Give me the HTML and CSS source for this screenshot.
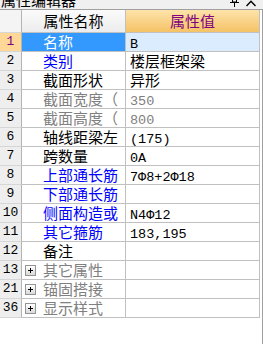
FILE: index.html
```html
<!DOCTYPE html>
<html lang="zh-CN">
<head>
    <meta charset="UTF-8">
    <title>属性编辑器</title>
    <link rel="stylesheet" href="styles.css">
</head>
<body>
<div id="panel">
    <div id="titlebar">
        <span class="title">属性编辑器</span>
        <span class="title-btns">
            <svg class="pin" width="9" height="9" viewBox="0 0 9 9"><rect x="2.5" y="-3" width="4" height="5" fill="none" stroke="#000"/><path d="M0 2.5H9M4.5 2.5V7" stroke="#000" fill="none"/></svg>
            <svg class="close" width="10" height="9" viewBox="0 0 10 9"><path d="M0.5 6L5 1.2L9.5 6" stroke="#000" stroke-width="1.4" fill="none"/></svg>
        </span>
    </div>
    <div id="grid">
        <div class="row head">
            <div class="cell idx"></div>
            <div class="cell name">属性名称</div>
            <div class="cell val">属性值</div>
        </div>
        <div class="row selected">
            <div class="cell idx">1</div>
            <div class="cell name"><span class="tree"></span>名称</div>
            <div class="cell val"><span class="num">B</span></div>
        </div>
        <div class="row">
            <div class="cell idx">2</div>
            <div class="cell name blue"><span class="tree"></span>类别</div>
            <div class="cell val">楼层框架梁</div>
        </div>
        <div class="row">
            <div class="cell idx">3</div>
            <div class="cell name"><span class="tree"></span>截面形状</div>
            <div class="cell val">异形</div>
        </div>
        <div class="row">
            <div class="cell idx">4</div>
            <div class="cell name gray"><span class="tree"></span>截面宽度（</div>
            <div class="cell val gray"><span class="num">350</span></div>
        </div>
        <div class="row">
            <div class="cell idx">5</div>
            <div class="cell name gray"><span class="tree"></span>截面高度（</div>
            <div class="cell val gray"><span class="num">800</span></div>
        </div>
        <div class="row">
            <div class="cell idx">6</div>
            <div class="cell name"><span class="tree"></span>轴线距梁左</div>
            <div class="cell val"><span class="num">(175)</span></div>
        </div>
        <div class="row">
            <div class="cell idx">7</div>
            <div class="cell name"><span class="tree"></span>跨数量</div>
            <div class="cell val"><span class="num">0A</span></div>
        </div>
        <div class="row">
            <div class="cell idx">8</div>
            <div class="cell name blue"><span class="tree"></span>上部通长筋</div>
            <div class="cell val"><span class="num">7Φ8+2Φ18</span></div>
        </div>
        <div class="row">
            <div class="cell idx">9</div>
            <div class="cell name blue"><span class="tree"></span>下部通长筋</div>
            <div class="cell val"></div>
        </div>
        <div class="row">
            <div class="cell idx">10</div>
            <div class="cell name blue"><span class="tree"></span>侧面构造或</div>
            <div class="cell val"><span class="num">N4Φ12</span></div>
        </div>
        <div class="row">
            <div class="cell idx">11</div>
            <div class="cell name blue"><span class="tree"></span>其它箍筋</div>
            <div class="cell val"><span class="num">183,195</span></div>
        </div>
        <div class="row">
            <div class="cell idx">12</div>
            <div class="cell name"><span class="tree"></span>备注</div>
            <div class="cell val"></div>
        </div>
        <div class="row">
            <div class="cell idx">13</div>
            <div class="cell name gray"><span class="tree"><i class="expander"></i></span>其它属性</div>
            <div class="cell val"></div>
        </div>
        <div class="row">
            <div class="cell idx">21</div>
            <div class="cell name gray"><span class="tree"><i class="expander"></i></span>锚固搭接</div>
            <div class="cell val"></div>
        </div>
        <div class="row">
            <div class="cell idx">36</div>
            <div class="cell name gray"><span class="tree"><i class="expander"></i></span>显示样式</div>
            <div class="cell val"></div>
        </div>
    </div>
</div>
</body>
</html>
```

FILE: styles.css
```css
*{
    margin:0;
    padding:0;
}
body{
    width: 263px;
    height: 344px;
    overflow: hidden;
    background: #fff;
    color: #000;
    font-size: 15px;
    font-family: "Noto Sans CJK SC", "Liberation Sans", sans-serif;
}

#titlebar{
    height: 9px;
    overflow: hidden;
    display: flex;
    background: #f0f0f0;
    border-bottom: 1px solid #a0a0a0;
}
#titlebar .title{
    display: block;
    line-height: 15px;
    margin: -8px 0 0 1px;
}
#titlebar .title-btns{
    margin-left: auto;
    margin-right: 7px;
    display: flex;
    gap: 7px;
}

#grid{
    height: 334px;
    border-right: 1px solid #a0a0a0;
}
.row{
    display: flex;
}
.cell{
    height: 18px;
    line-height: 18px;
    border-right: 1px solid #c0c0c0;
    border-bottom: 1px solid #c0c0c0;
    white-space: nowrap;
}
.idx{
    width: 21px;
    text-align: center;
    background: #eeeeee;
    border-bottom-color: #d6d6d6;
    border-right-color: #b4b4b4;
    font-family: "Liberation Mono", monospace;
    font-size: 13px;
}
.name{
    width: 103px;
    display: flex;
}
.val{
    width: 129px;
    padding-left: 4px;
}
.num{
    font-family: "Liberation Mono", "Noto Sans CJK SC", monospace;
    font-size: 13.5px;
}
.tree{
    width: 21px;
    flex: none;
    display: flex;
    align-items: center;
}
.expander{
    width: 9px;
    height: 9px;
    margin-left: 3px;
    border: 1px solid #949494;
    background: linear-gradient(#ffffff, #dadada);
    position: relative;
}
.expander::before,
.expander::after{
    content: "";
    position: absolute;
    background: #000;
}
.expander::before{
    left: 2px;
    top: 4px;
    width: 5px;
    height: 1px;
}
.expander::after{
    left: 4px;
    top: 2px;
    width: 1px;
    height: 5px;
}

.blue{
    color: #0000ff;
}
.gray{
    color: #808080;
}

.head .cell{
    height: 22px;
    line-height: 22px;
}
.head .idx{
    background: #f4f4f4;
}
.head .name{
    justify-content: center;
    background: linear-gradient(#fbfbfb, #ececec);
}
.head .val{
    padding-left: 0;
    width: 133px;
    text-align: center;
    color: #800080;
    background: linear-gradient(#fde3aa, #f5c266);
}

.selected .idx{
    background: #ffd898;
    color: #800080;
}
.selected .name{
    background: #3399ff;
    color: #fff;
}
.selected .val{
    background: #dcecff;
}
```
